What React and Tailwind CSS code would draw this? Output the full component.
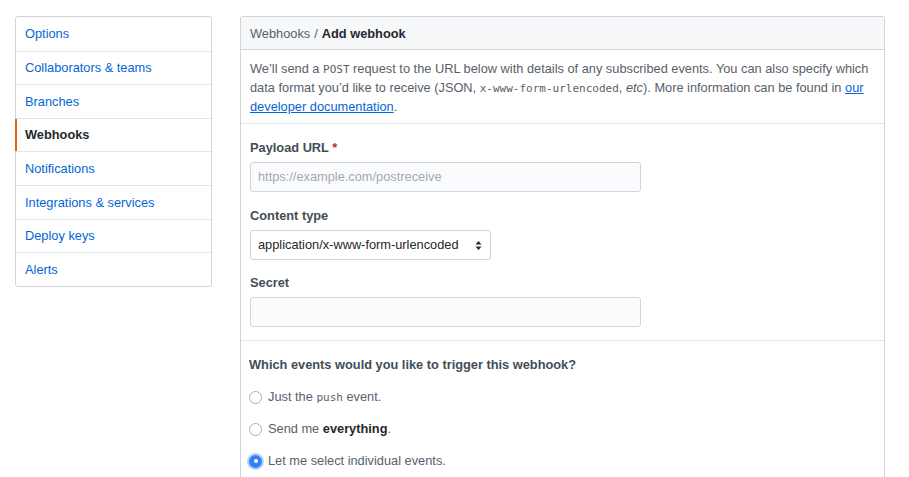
import React from "react";

const navItems = [
  "Options",
  "Collaborators & teams",
  "Branches",
  "Webhooks",
  "Notifications",
  "Integrations & services",
  "Deploy keys",
  "Alerts",
];

const mono = { fontFamily: '"DejaVu Sans Mono", monospace' };

function Radio({ checked }) {
  if (checked) {
    return (
      <span className="flex h-[13px] w-[13px] shrink-0 items-center justify-center rounded-full bg-[#2f81f7] shadow-[0_0_0_2px_rgba(47,129,247,0.35)]">
        <span className="h-[4px] w-[4px] rounded-full bg-white" />
      </span>
    );
  }
  return <span className="h-[13px] w-[13px] shrink-0 rounded-full border border-[#a8adb3] bg-white" />;
}

export default function App() {
  return (
    <div
      className="flex h-[477px] items-start overflow-hidden bg-white pl-[15px] pt-[16px] text-[12.8px] text-[#24292e]"
      style={{ fontFamily: '"Liberation Sans", Arial, sans-serif' }}
    >
      <nav className="w-[197px] shrink-0 rounded-[3px] border border-[#d1d5da]">
        {navItems.map((item, i) => {
          const active = item === "Webhooks";
          return (
            <div
              key={item}
              className={
                "relative flex h-[33.6px] items-center pl-[9px] " +
                (i > 0 ? "border-t border-[#e1e4e8] " : "") +
                (active ? "font-semibold text-[#24292e]" : "text-[#0366d6]")
              }
            >
              {active && <span className="absolute bottom-0 left-[-1px] top-0 w-[2px] bg-[#e36209]" />}
              {item}
            </div>
          );
        })}
      </nav>

      <div className="ml-[28px] w-[645px] rounded-t-[3px] border-x border-t border-[#d1d5da]">
        <div className="flex h-[33px] items-center border-b border-[#d1d5da] bg-[#f6f8fa] px-[9px] pt-[1px]">
          <span className="text-[#586069]">Webhooks</span>
          <span className="ml-[4px] text-[#586069]">/</span>
          <span className="ml-[4px] font-bold text-[#24292e]">Add webhook</span>
        </div>

        <div className="border-b border-[#e1e4e8] pb-[7px] pl-[9px] pr-[8px] pt-[10px] leading-[18px] text-[#586069]">
          We’ll send a{" "}
          <code className="text-[11px]" style={mono}>
            POST
          </code>{" "}
          request to the URL below with details of any subscribed events. You can also specify which data
          format you’d like to receive (JSON,{" "}
          <code className="text-[11px]" style={mono}>
            x-www-form-urlencoded
          </code>
          , <em>etc</em>). More information can be found in{" "}
          <a className="text-[#0366d6] underline">our developer documentation</a>.
        </div>

        <div className="border-b border-[#e1e4e8] px-[9px] pb-[13px] pt-[15px]">
          <div className="leading-[18px] font-bold text-[#444d56]">
            Payload URL <span className="text-[#cb2431]">*</span>
          </div>
          <div className="mt-[5px] flex h-[30px] w-[391px] items-center rounded-[3px] border border-[#d1d5da] bg-[#fafbfc] px-[7px] text-[#a3aab1]">
            https://example.com/postreceive
          </div>

          <div className="mt-[15px] leading-[18px] font-bold text-[#444d56]">Content type</div>
          <div className="mt-[5px] flex h-[30px] w-[241px] items-center justify-between rounded-[3px] border border-[#d1d5da] bg-white pl-[7px] pr-[8px] text-[#24292e]">
            <span>application/x-www-form-urlencoded</span>
            <svg width="7" height="11" viewBox="0 0 7 11">
              <path d="M0.5 4.5 L3.5 1 L6.5 4.5 Z" fill="#24292e" />
              <path d="M0.5 6.5 L3.5 10 L6.5 6.5 Z" fill="#24292e" />
            </svg>
          </div>

          <div className="mt-[14px] leading-[18px] font-bold text-[#444d56]">Secret</div>
          <div className="mt-[5px] h-[30px] w-[391px] rounded-[3px] border border-[#d1d5da] bg-[#fafbfc]" />
        </div>

        <div className="px-[8px] pb-[40px] pt-[15px]">
          <div className="leading-[18px] font-bold text-[#444d56]">Which events would you like to trigger this webhook?</div>
          <div className="mt-[14px] flex h-[18px] items-center gap-[6px] text-[#586069]">
            <Radio />
            <span>
              Just the{" "}
              <code className="text-[11px]" style={mono}>
                push
              </code>{" "}
              event.
            </span>
          </div>
          <div className="mt-[14px] flex h-[18px] items-center gap-[6px] text-[#586069]">
            <Radio />
            <span>
              Send me <b className="text-[#24292e]">everything</b>.
            </span>
          </div>
          <div className="mt-[14px] flex h-[18px] items-center gap-[6px] text-[#586069]">
            <Radio checked />
            <span>Let me select individual events.</span>
          </div>
        </div>
      </div>
    </div>
  );
}
